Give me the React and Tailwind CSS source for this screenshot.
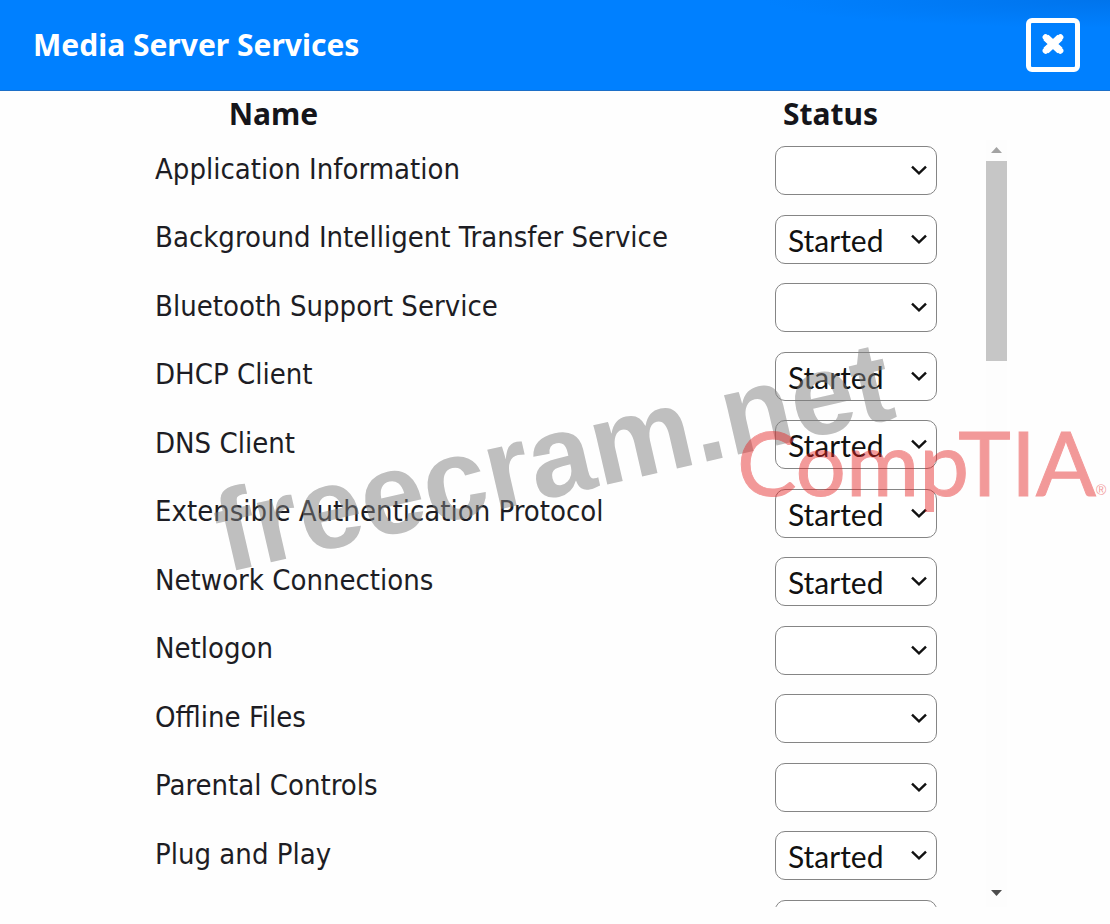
import React from "react";

const services = [
  ["Application Information", ""],
  ["Background Intelligent Transfer Service", "Started"],
  ["Bluetooth Support Service", ""],
  ["DHCP Client", "Started"],
  ["DNS Client", "Started"],
  ["Extensible Authentication Protocol", "Started"],
  ["Network Connections", "Started"],
  ["Netlogon", ""],
  ["Offline Files", ""],
  ["Parental Controls", ""],
  ["Plug and Play", "Started"],
  ["", ""],
];

function Header() {
  return (
    <header className="flex h-[91px] shrink-0 items-center justify-between border-b border-[#1c6fc8] bg-[#0080ff] bg-[radial-gradient(ellipse_at_top_right,#0074ec,#0080ff_22%)] pr-[30px] pl-[33px]">
      <h1 className="font-['Noto_Sans',sans-serif] text-[30px] leading-10 font-bold text-white">
        Media Server Services
      </h1>
      <button
        type="button"
        aria-label="Close"
        className="flex h-[54px] w-[54px] items-center justify-center rounded-md border-[5px] border-white"
      >
        <svg viewBox="0 0 24 24" className="h-6 w-6" aria-hidden="true">
          <path
            d="M5 4.6 19 17.4M19 4.6 5 17.4"
            stroke="#fff"
            strokeWidth="7.4"
            strokeLinecap="butt"
            fill="none"
          />
          <path
            d="M4.6 4.2 19.4 17.8M19.4 4.2 4.6 17.8"
            stroke="#fff"
            strokeWidth="6"
            strokeLinecap="round"
            fill="none"
          />
        </svg>
      </button>
    </header>
  );
}

function StatusSelect({ id, value, label }) {
  return (
    <div className="grid w-[162px] items-center">
      <select
        id={id}
        defaultValue={value}
        aria-label={label}
        className="col-start-1 row-start-1 h-[49px] w-full appearance-none rounded-[10px] border border-[#858585] bg-white pl-3 font-['Lato',sans-serif] text-[30px] leading-[42px] text-[#111]"
      >
        <option value=""></option>
        <option value="Started">Started</option>
        <option value="Stopped">Stopped</option>
      </select>
      <svg
        viewBox="0 0 18 12"
        className="pointer-events-none col-start-1 row-start-1 mr-[9px] h-3 w-[18px] justify-self-end"
        aria-hidden="true"
      >
        <path d="M2 1.6 9 8.4 16 1.6" fill="none" stroke="#111" strokeWidth="2.4" />
      </svg>
    </div>
  );
}

function Scrollbar() {
  return (
    <div className="flex w-[21px] flex-col items-center bg-[#fdfdfd]" aria-hidden="true">
      <svg viewBox="0 0 21 21" className="h-[21px] w-[21px]">
        <path d="M5 13h11l-5.5-6z" fill="#a3a3a3" />
      </svg>
      <div className="h-[200px] w-full bg-[#c6c6c6]" />
      <div className="flex-1" />
      <svg viewBox="0 0 21 21" className="mb-1 h-[21px] w-[21px]">
        <path d="M5 8h11l-5.5 6z" fill="#4d4d4d" />
      </svg>
    </div>
  );
}

export default function App() {
  return (
    <main className="relative flex h-screen flex-col overflow-hidden bg-[#fefefe] font-['DejaVu_Sans_Condensed','DejaVu_Sans',sans-serif] text-[#1d1d24]">
      <Header />
      <div className="flex shrink-0 pr-[173px] pb-[3px] pl-[155px] font-['Noto_Sans',sans-serif] text-[30px] leading-[46px] font-bold text-[#15151a]">
        <div id="name-heading" className="flex-1">
          <span className="block w-[237px] text-center">Name</span>
        </div>
        <div id="status-heading" className="w-[162px] pl-2">Status</div>
      </div>
      <div className="mb-[17px] flex min-h-0 flex-1 pr-[103px] pl-[155px]">
        <div className="min-w-0 flex-1 overflow-hidden pr-[49px]">
          <table className="w-full" aria-labelledby="name-heading status-heading">
            <tbody>
              {services.map(([name, status], i) => (
                <tr key={i} className="odd:h-[69px] even:h-[68px]">
                  <th scope="row" className="p-0 pb-3 text-left align-middle font-normal">
                    {name && (
                      <label htmlFor={`service-${i}`} className="text-[29px] leading-10 whitespace-nowrap">
                        {name}
                      </label>
                    )}
                  </th>
                  <td className="w-[162px] p-0 pt-[6px] align-top">
                    <StatusSelect id={`service-${i}`} value={status} label={name ? undefined : "Status"} />
                  </td>
                </tr>
              ))}
            </tbody>
          </table>
        </div>
        <Scrollbar />
      </div>

      <div className="pointer-events-none absolute top-[399px] left-[208px] -rotate-13 font-['Liberation_Sans',Arial,sans-serif] text-[115px] leading-none font-bold whitespace-nowrap text-[#808080]/50">
        freecram.net
      </div>
      <div className="pointer-events-none absolute top-[408px] left-[737px] flex items-end whitespace-nowrap text-[#e52121] opacity-45">
        <span className="font-['Lato',sans-serif] text-[89px] leading-[108px] [-webkit-text-stroke:1px_#e52121]">CompTIA</span>
        <span className="pb-[18px] font-['Liberation_Sans',sans-serif] text-[14px] leading-4">®</span>
      </div>
    </main>
  );
}
